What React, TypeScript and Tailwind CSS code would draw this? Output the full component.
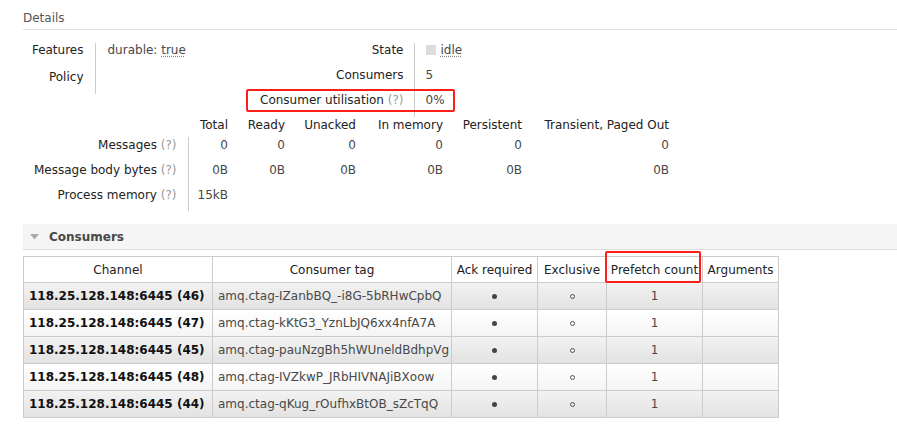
import React from 'react'

const consumers = [
  { channel: '118.25.128.148:6445 (46)', tag: 'amq.ctag-IZanbBQ_-i8G-5bRHwCpbQ' },
  { channel: '118.25.128.148:6445 (47)', tag: 'amq.ctag-kKtG3_YznLbJQ6xx4nfA7A' },
  { channel: '118.25.128.148:6445 (45)', tag: 'amq.ctag-pauNzgBh5hWUneldBdhpVg' },
  { channel: '118.25.128.148:6445 (48)', tag: 'amq.ctag-IVZkwP_JRbHIVNAJiBXoow' },
  { channel: '118.25.128.148:6445 (44)', tag: 'amq.ctag-qKug_rOufhxBtOB_sZcTqQ' },
]

const msgCols = [
  { name: 'Total', w: 'w-[40px]' },
  { name: 'Ready', w: 'w-[57px]' },
  { name: 'Unacked', w: 'w-[71px]' },
  { name: 'In memory', w: 'w-[87px]' },
  { name: 'Persistent', w: 'w-[79px]' },
  { name: 'Transient, Paged Out', w: 'w-[147px]' },
]

function Help() {
  return <span className="text-[#999]"> (?)</span>
}

export default function App() {
  return (
    <div className="w-[897px] h-[433px] bg-white overflow-hidden font-['DejaVu_Sans',sans-serif] text-[12px] leading-[14px] text-[#222]">
      <div className="pl-[23px]">
        <h2 className="pt-[11px] pb-[4px] border-b border-[#e0e0e0] text-[#555]">Details</h2>

        <div className="relative mt-[13px] flex">
          <table className="w-[222px] self-start">
            <tbody>
              <tr className="h-[26px] align-top">
                <th className="w-[72px] pr-[11px] text-right font-normal border-r border-[#ccc]">Features</th>
                <td className="pl-[12px] text-[#484848]">
                  durable: <span className="underline decoration-dotted decoration-[#888] underline-offset-2">true</span>
                </td>
              </tr>
              <tr className="h-[25px] align-top">
                <th className="pt-[1px] pr-[11px] text-right font-normal border-r border-[#ccc]">Policy</th>
                <td className="pl-[12px]"></td>
              </tr>
            </tbody>
          </table>

          <table>
            <tbody>
              <tr className="h-[25px] align-top">
                <th className="w-[169px] pr-[10px] text-right font-normal border-r border-[#ccc]">State</th>
                <td className="pl-[11px] text-[#484848]">
                  <span className="inline-flex items-center gap-[5px]">
                    <span className="inline-block w-[10px] h-[10px] bg-[#ddd]"></span>
                    <span className="underline decoration-dotted decoration-[#888] underline-offset-2">idle</span>
                  </span>
                </td>
              </tr>
              <tr className="h-[25px] align-top">
                <th className="pr-[10px] text-right font-normal border-r border-[#ccc]">Consumers</th>
                <td className="pl-[11px] text-[#484848]">5</td>
              </tr>
              <tr className="h-[24px] align-top">
                <th className="pr-[10px] text-right font-normal border-r border-[#ccc] whitespace-nowrap">
                  Consumer utilisation<Help />
                </th>
                <td className="pl-[11px] pr-[8px] text-[#484848]">0%</td>
              </tr>
            </tbody>
          </table>

          <div className="absolute left-[223px] top-[46px] w-[209px] h-[23px] border-[2.5px] border-[#ff1f1a] rounded-[2px]"></div>
        </div>

        <table>
          <thead>
            <tr className="h-[20px] align-top">
              <th className="w-[165px]"></th>
              {msgCols.map((c) => (
                <th key={c.name} className={`${c.w} pt-[1px] text-right font-normal whitespace-nowrap`}>{c.name}</th>
              ))}
            </tr>
          </thead>
          <tbody className="text-[#484848]">
            <tr className="h-[25px] align-top">
              <th className="pt-[1px] pr-[11px] text-right font-normal text-[#222] border-r border-[#ccc]">Messages<Help /></th>
              {msgCols.map((c) => (
                <td key={c.name} className="pt-[1px] text-right">0</td>
              ))}
            </tr>
            <tr className="h-[25px] align-top">
              <th className="pt-[1px] pr-[11px] text-right font-normal text-[#222] border-r border-[#ccc] whitespace-nowrap">Message body bytes<Help /></th>
              {msgCols.map((c) => (
                <td key={c.name} className="pt-[1px] text-right">0B</td>
              ))}
            </tr>
            <tr className="h-[24px] align-top">
              <th className="pt-[1px] pr-[11px] text-right font-normal text-[#222] border-r border-[#ccc]">Process memory<Help /></th>
              <td className="pt-[1px] text-right">15kB</td>
              <td colSpan={5}></td>
            </tr>
          </tbody>
        </table>
      </div>

      <div className="mt-[13px] ml-[23px] h-[26px] flex items-center gap-[10px] pl-[7px] bg-[#f5f5f5] border-b border-[#ddd]">
        <svg width="9" height="6" viewBox="0 0 9 6">
          <path d="M0 0 H9 L4.5 5.5 Z" fill="#aaa" />
        </svg>
        <span className="font-bold text-[#484848] pt-[1px]">Consumers</span>
      </div>

      <div className="relative ml-[23px] mt-[6px]">
        <table className="border border-[#ccc]">
          <thead>
            <tr className="h-[26px] bg-white">
              <th className="w-[189px] border border-[#ccc] font-normal">Channel</th>
              <th className="w-[239px] border border-[#ccc] font-normal">Consumer tag</th>
              <th className="w-[86px] border border-[#ccc] font-normal">Ack required</th>
              <th className="w-[69px] border border-[#ccc] font-normal">Exclusive</th>
              <th className="w-[96px] border border-[#ccc] font-normal">Prefetch count</th>
              <th className="w-[76px] border border-[#ccc] font-normal">Arguments</th>
            </tr>
          </thead>
          <tbody>
            {consumers.map((c, i) => (
              <tr
                key={c.tag}
                className={
                  i % 2 === 0
                    ? 'h-[27px] bg-gradient-to-b from-[#f2f2f2] to-[#e2e2e2]'
                    : 'h-[27px] bg-gradient-to-b from-[#ffffff] to-[#f4f4f4]'
                }
              >
                <td className="border border-[#ccc] pl-[5px] font-bold text-[#111] whitespace-nowrap">{c.channel}</td>
                <td className="border border-[#ccc] pl-[5px] text-[#484848] whitespace-nowrap">{c.tag}</td>
                <td className="border border-[#ccc] text-center">
                  <span className="inline-block w-[5px] h-[5px] rounded-full bg-[#444] align-middle"></span>
                </td>
                <td className="border border-[#ccc] text-center">
                  <span className="inline-block w-[5px] h-[5px] rounded-full border border-[#555] align-middle"></span>
                </td>
                <td className="border border-[#ccc] text-center text-[#484848]">1</td>
                <td className="border border-[#ccc]"></td>
              </tr>
            ))}
          </tbody>
        </table>
        <div className="absolute left-[582px] top-[-5px] w-[96px] h-[32px] border-[2.5px] border-[#ff1f1a] rounded-[2px]"></div>
      </div>
    </div>
  )
}
